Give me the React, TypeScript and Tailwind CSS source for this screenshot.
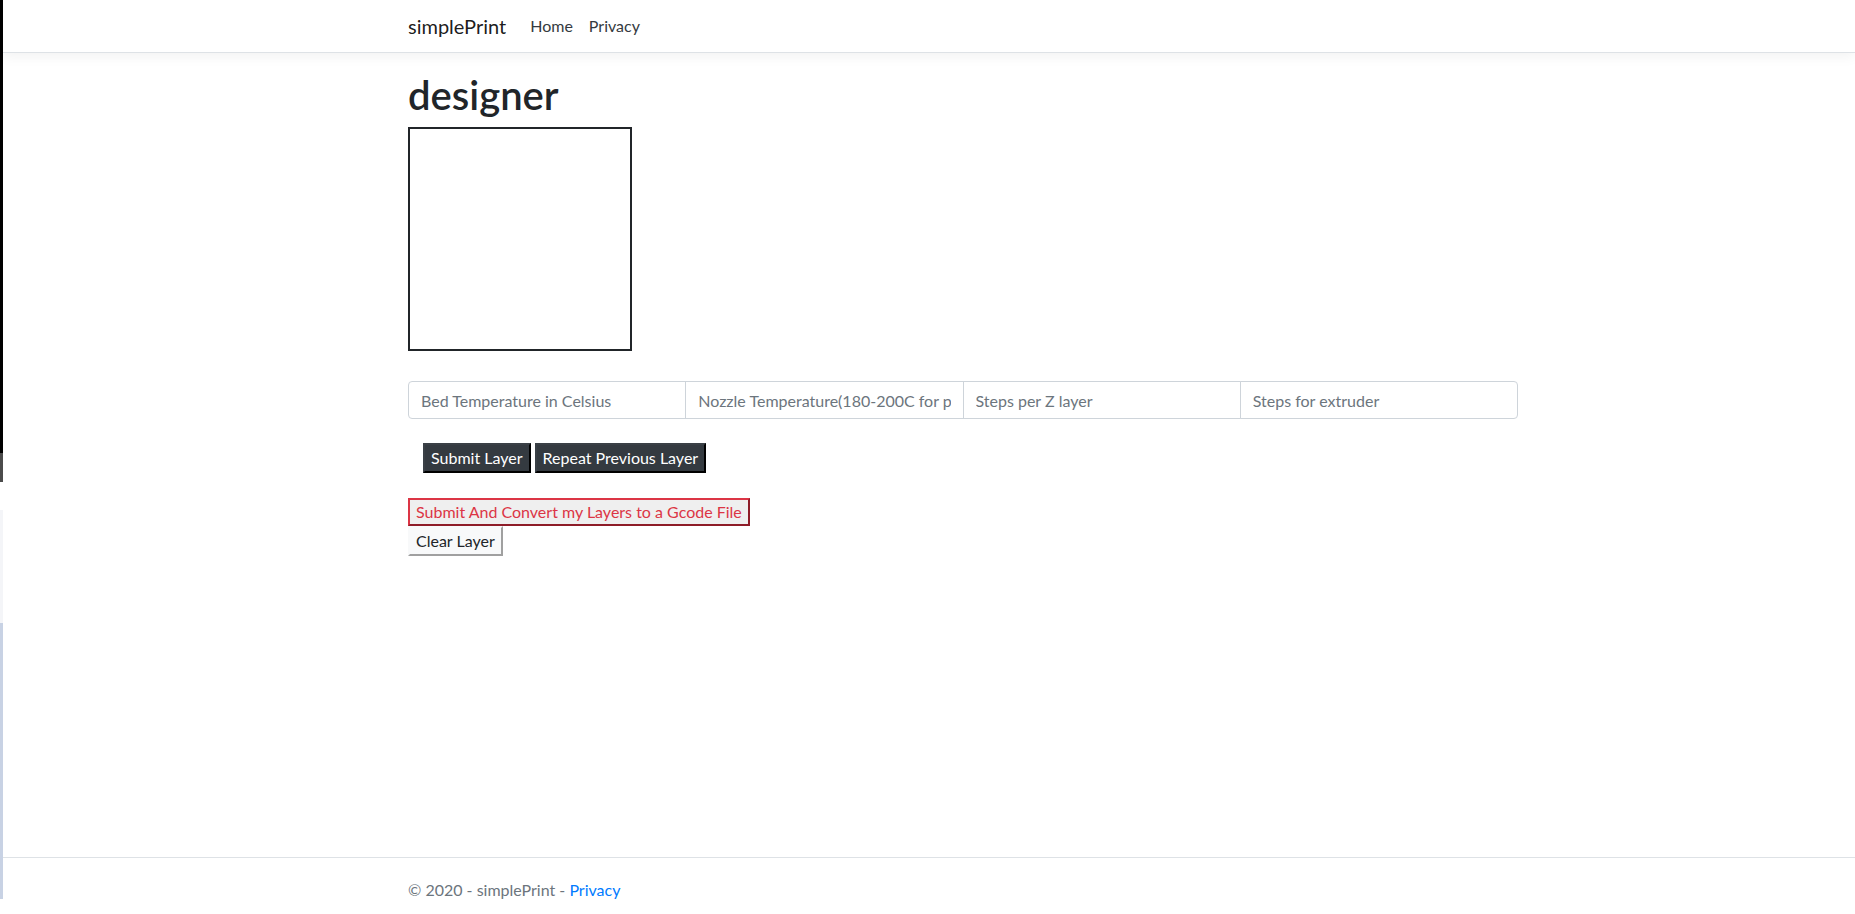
import React from "react";

const font = { fontFamily: "Lato, 'Liberation Sans', sans-serif" };

function EdgeStrip() {
	return (
		<div className="flex w-[3px] shrink-0 flex-col">
			<div className="h-[453px] bg-black" />
			<div className="h-[29px] bg-[#4b4b4b]" />
			<div className="h-[28px] bg-white" />
			<div className="h-[113px] bg-[#f4f5f8]" />
			<div className="h-[276px] bg-[#c8d2e4]" />
			<div className="flex-1 bg-white" />
		</div>
	);
}

function NavBar() {
	return (
		<nav className="relative z-10 h-[53px] border-b border-[#dee2e6] bg-white shadow-[0_4px_12px_rgba(0,0,0,0.05)]">
			<div className="ml-[405px] flex h-full w-[1110px] items-center">
				<a className="mr-4 text-[20px] text-[rgba(0,0,0,0.9)]" href="#">
					simplePrint
				</a>
				<a className="px-2 text-base text-[#343a40]" href="#">
					Home
				</a>
				<a className="px-2 text-base text-[#343a40]" href="#">
					Privacy
				</a>
			</div>
		</nav>
	);
}

const fields = [
	"Bed Temperature in Celsius",
	"Nozzle Temperature(180-200C for pla)",
	"Steps per Z layer",
	"Steps for extruder",
];

function SettingsGroup() {
	return (
		<div className="mt-[30px] flex h-[38px] w-[1110px]">
			{fields.map((label, i) => (
				<input
					className={`h-full min-w-0 flex-1 border border-[#ced4da] bg-white px-3 text-base text-[#495057] outline-none placeholder:text-[#6c757d] ${
						i === 0 ? "rounded-l" : "-ml-px"
					} ${i === fields.length - 1 ? "rounded-r" : ""}`}
					key={label}
					placeholder={label}
					style={font}
					type="text"
				/>
			))}
		</div>
	);
}

export default function App() {
	return (
		<div className="flex min-h-[914px] bg-white text-[#212529]" style={font}>
			<EdgeStrip />
			<div className="flex min-w-0 flex-1 flex-col">
				<NavBar />
				<main className="ml-[405px] w-[1110px] flex-1 pt-[18px]">
					<h1 className="mb-2 text-[40px] font-semibold leading-[1.2]">designer</h1>
					<div className="h-[224px] w-[224px] border-2 border-[#212529] bg-white" />
					<SettingsGroup />
					<div className="mt-[24px] flex gap-1 pl-[15px]">
						<button
							className="border-2 border-t-[#3a4046] border-l-[#3a4046] border-b-black border-r-black bg-[#343a40] px-[6px] py-px text-base leading-6 text-white"
							style={font}
							type="button"
						>
							Submit Layer
						</button>
						<button
							className="border-2 border-t-[#3a4046] border-l-[#3a4046] border-b-black border-r-black bg-[#343a40] px-[6px] py-px text-base leading-6 text-white"
							style={font}
							type="button"
						>
							Repeat Previous Layer
						</button>
					</div>
					<div className="mt-[25px] flex flex-col items-start">
						<button
							className="border-2 border-t-[#dc3545] border-l-[#dc3545] border-b-[#8e1c28] border-r-[#8e1c28] bg-[#efefef] px-[6px] py-0 text-base leading-6 text-[#dc3545]"
							style={font}
							type="button"
						>
							Submit And Convert my Layers to a Gcode File
						</button>
						<button
							className="border-2 border-t-[#f8f9fa] border-l-[#f8f9fa] border-b-[#a0a0a0] border-r-[#a0a0a0] bg-[#f8f9fa] px-[6px] py-px text-base leading-6 text-[#212529]"
							style={font}
							type="button"
						>
							Clear Layer
						</button>
					</div>
				</main>
				<footer className="h-[57px] border-t border-[#dee2e6] whitespace-nowrap">
					<div className="ml-[405px] w-[1110px] text-base leading-[64px] text-[#6c757d]">
						© 2020 - simplePrint -{" "}
						<a className="text-[#007bff]" href="#">
							Privacy
						</a>
					</div>
				</footer>
			</div>
		</div>
	);
}
